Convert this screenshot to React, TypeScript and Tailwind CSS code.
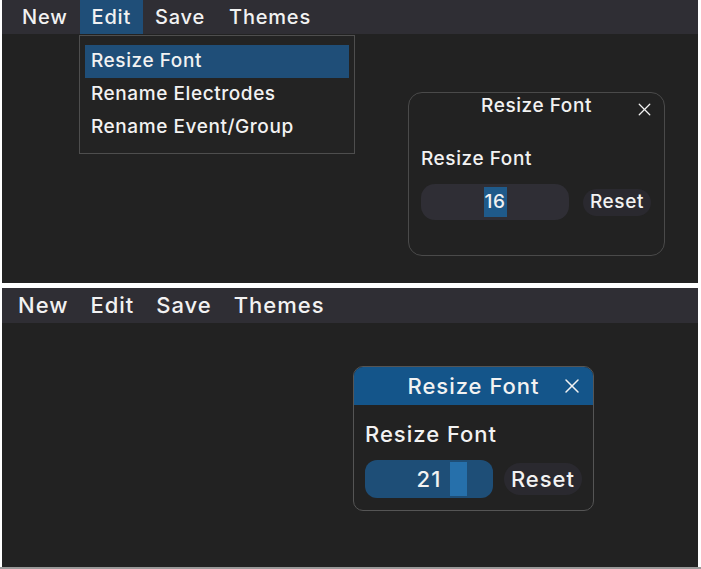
import { X } from 'lucide-react';

const font = { fontFamily: 'Inter, "Noto Sans", sans-serif' };

function MenuBar({ active, big }: { active?: string; big?: boolean }) {
  const items = ['New', 'Edit', 'Save', 'Themes'];
  return (
    <div
      className={`flex bg-[#2f2e34] ${big ? 'h-[35px] pl-[5px] text-[22px] tracking-[0.045em]' : 'h-[34px] pl-[8px] text-[20px] tracking-[0.04em]'} font-medium text-[#f2f2f2]`}
    >
      {items.map((it) => (
        <div
          key={it}
          className={`flex items-center ${big ? 'px-[11px]' : 'px-[12px]'} ${active === it ? 'bg-[#1f4e78]' : ''}`}
        >
          {it}
        </div>
      ))}
    </div>
  );
}

function EditMenu() {
  const items = ['Resize Font', 'Rename Electrodes', 'Rename Event/Group'];
  return (
    <div className="absolute left-[77px] top-[35px] w-[276px] h-[119px] border border-[#4e4e4e] bg-[#232323] px-[5px] pt-[9px] text-[19px] tracking-[0.03em] font-medium text-[#f2f2f2]">
      {items.map((it, i) => (
        <div
          key={it}
          className={`h-[33px] flex items-center px-[6px] ${i === 0 ? 'bg-[#1f4e78]' : ''}`}
        >
          {it}
        </div>
      ))}
    </div>
  );
}

function TopDialog() {
  return (
    <div className="absolute left-[406px] top-[92px] w-[257px] h-[164px] rounded-[14px] border border-[#4a4a4a] text-[#f2f2f2] font-medium text-[19px] tracking-[0.03em]">
      <div className="relative h-[27px] flex items-center justify-center">
        Resize Font
        <X className="absolute right-[9px] top-[6px] w-[21px] h-[21px]" strokeWidth={1.5} />
      </div>
      <div className="px-[12px] pt-[27px]">
        <div className="leading-[23px]">Resize Font</div>
        <div className="mt-[14px] flex items-center gap-[14px]">
          <div className="w-[148px] h-[36px] rounded-[14px] bg-[#2f2e35] flex items-center justify-center">
            <span className="bg-[#1f5a8a] px-[1px] leading-[30px]">16</span>
          </div>
          <div className="h-[27px] px-[7px] rounded-full bg-[#2a292f] flex items-center">
            Reset
          </div>
        </div>
      </div>
    </div>
  );
}

function BottomDialog() {
  return (
    <div className="absolute left-[351px] top-[78px] w-[241px] h-[145px] rounded-[10px] border border-[#555555] overflow-hidden text-[#f2f2f2] font-medium text-[22px] tracking-[0.045em]">
      <div className="relative h-[38px] bg-[#14558a] flex items-center justify-center">
        Resize Font
        <X className="absolute right-[9px] top-[7px] w-[24px] h-[24px]" strokeWidth={1.5} />
      </div>
      <div className="px-[11px] pt-[16px]">
        <div className="leading-[27px]">Resize Font</div>
        <div className="mt-[12px] flex items-center gap-[11px]">
          <div className="relative w-[129px] h-[38px] rounded-[12px] bg-[#1e4e77] flex items-center justify-center">
            21
            <span className="absolute left-[85px] top-[2px] w-[17px] h-[34px] bg-[#2670ab]" />
          </div>
          <div className="h-[32px] px-[7px] rounded-full bg-[#2a292f] flex items-center">
            Reset
          </div>
        </div>
      </div>
    </div>
  );
}

export default function App() {
  return (
    <div className="w-[701px] h-[569px] bg-white flex flex-col" style={font}>
      <div className="relative ml-[2px] mr-[3px] h-[283px] bg-[#222222]">
        <MenuBar active="Edit" />
        <EditMenu />
        <TopDialog />
      </div>
      <div className="relative ml-[2px] mr-[3px] mt-[5px] h-[279px] bg-[#222222]">
        <MenuBar big />
        <BottomDialog />
      </div>
      <div className="flex-1 bg-[#9a9a9a]" />
    </div>
  );
}
